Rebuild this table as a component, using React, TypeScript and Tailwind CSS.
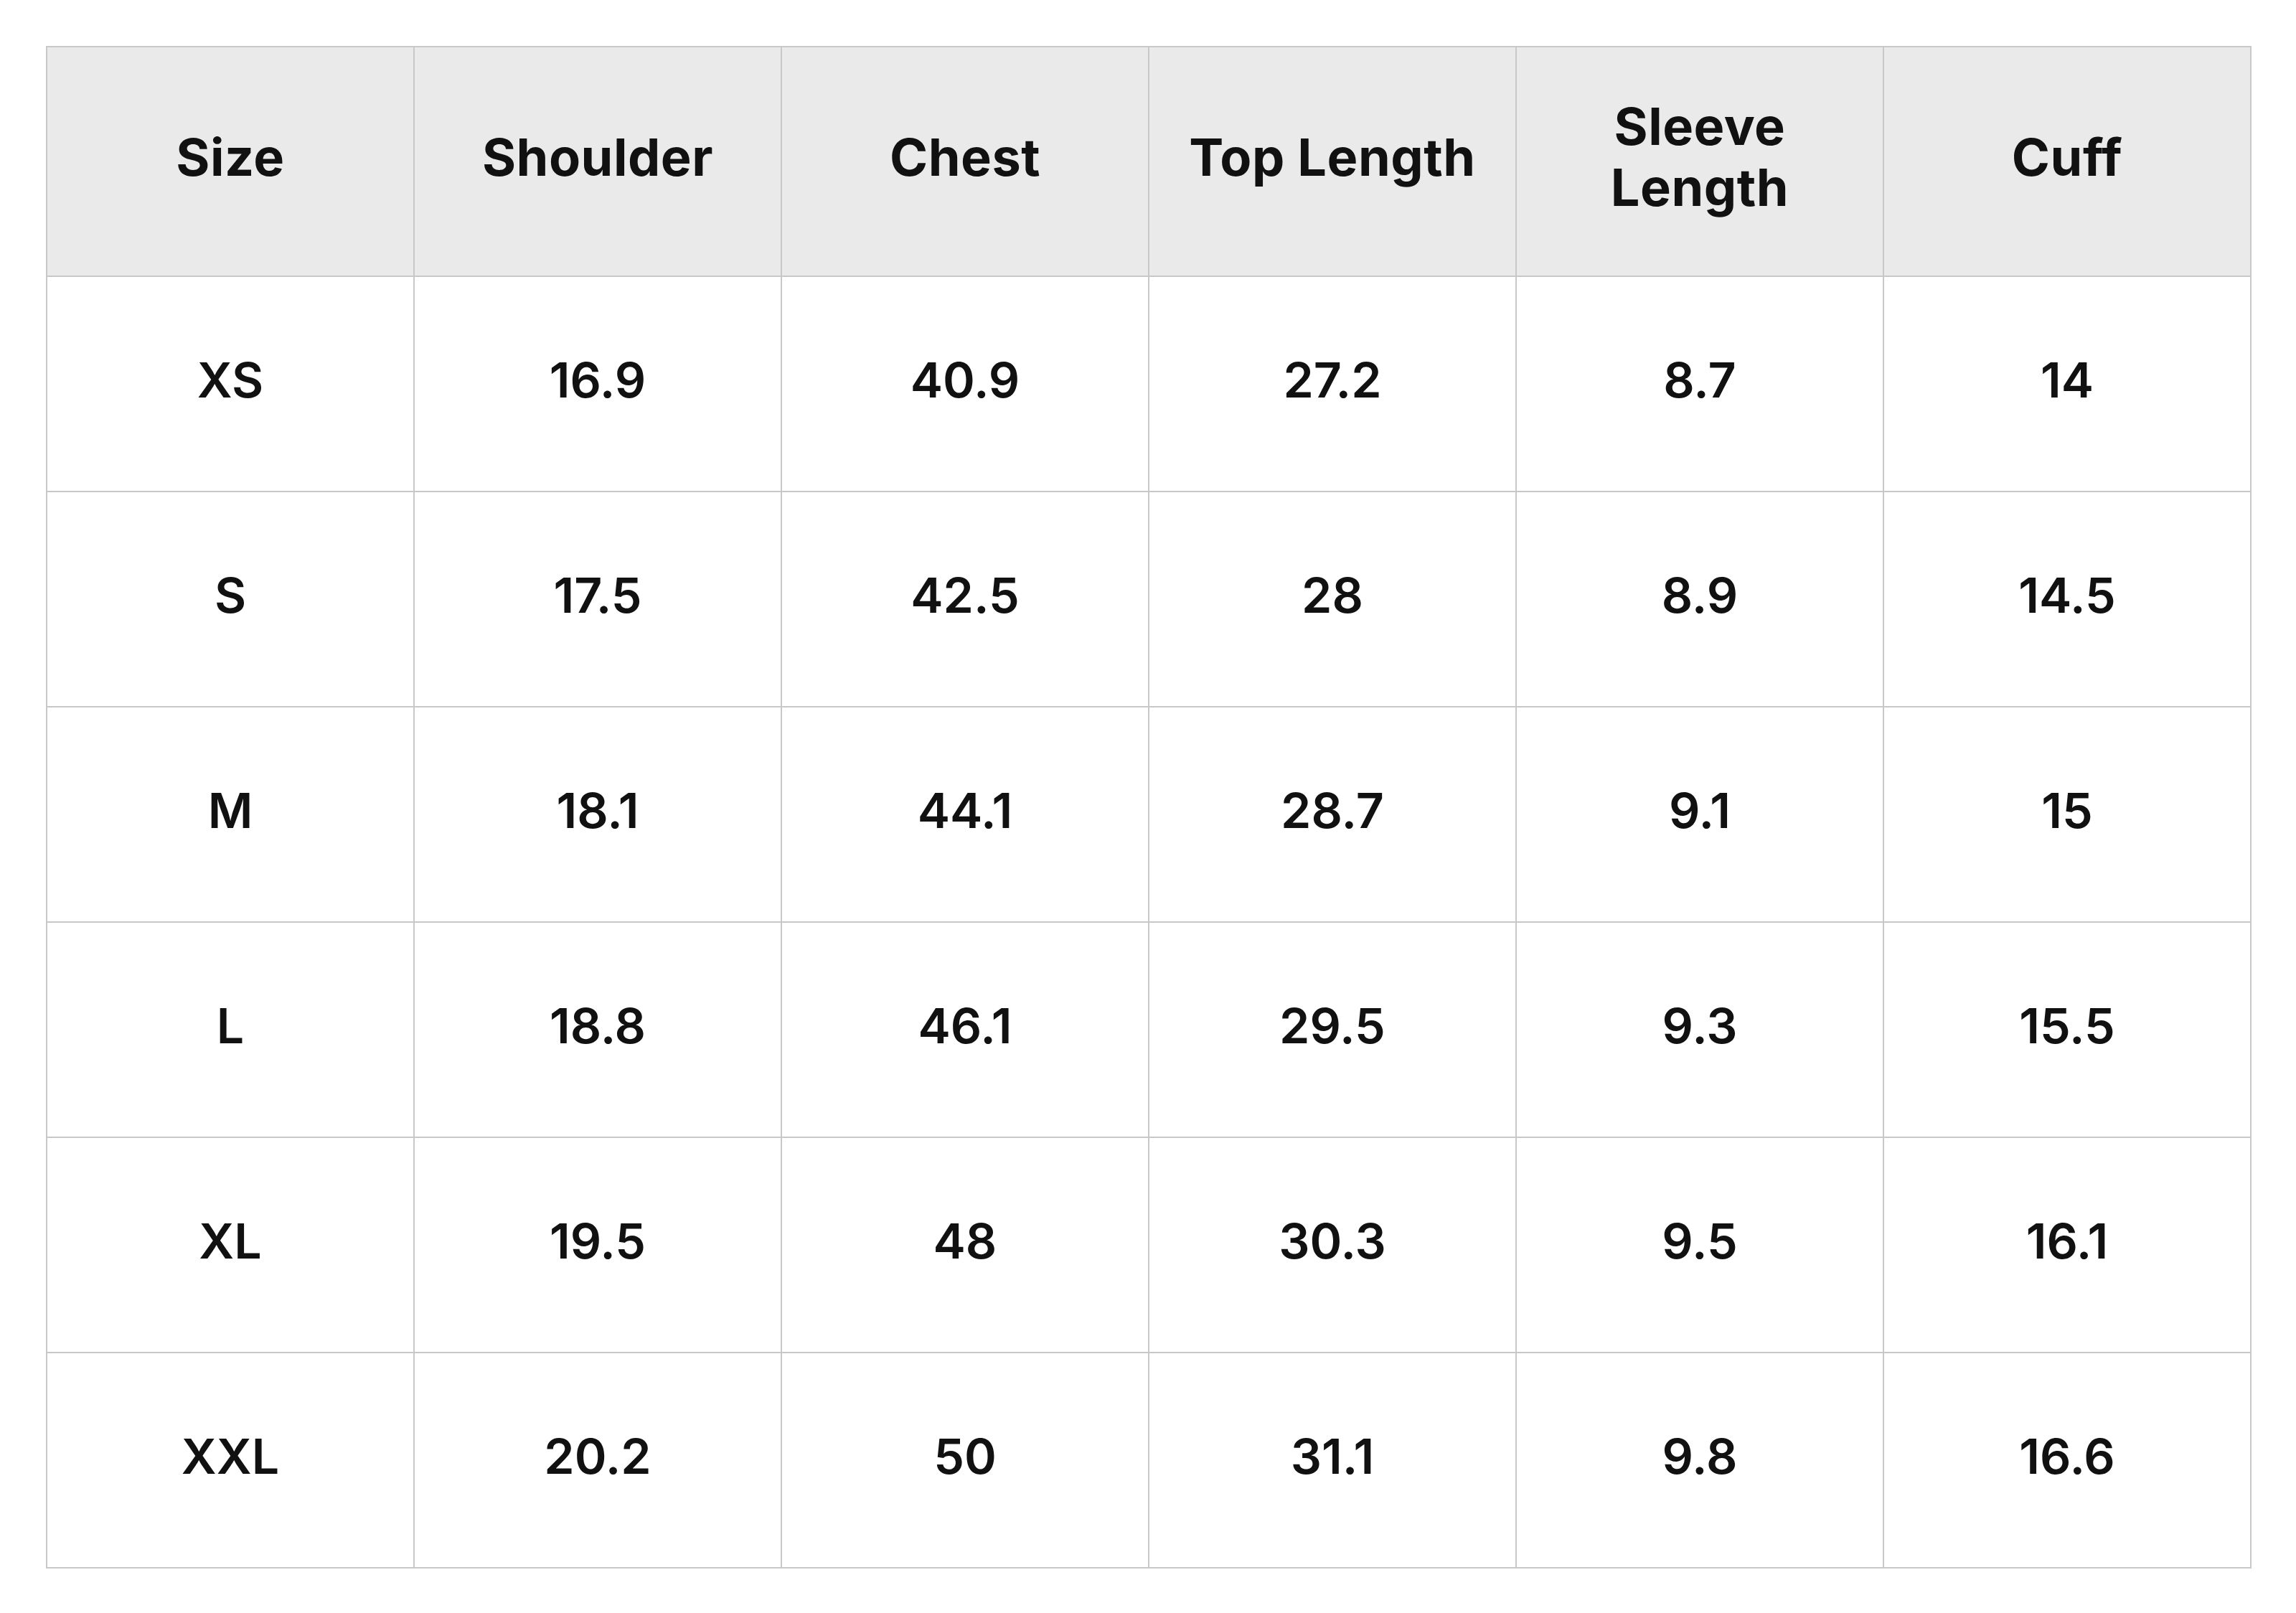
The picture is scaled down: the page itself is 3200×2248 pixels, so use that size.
import React from "react";

const headers = ["Size", "Shoulder", "Chest", "Top Length", "Sleeve Length", "Cuff"];
const rows = [
  ["XS", "16.9", "40.9", "27.2", "8.7", "14"],
  ["S", "17.5", "42.5", "28", "8.9", "14.5"],
  ["M", "18.1", "44.1", "28.7", "9.1", "15"],
  ["L", "18.8", "46.1", "29.5", "9.3", "15.5"],
  ["XL", "19.5", "48", "30.3", "9.5", "16.1"],
  ["XXL", "20.2", "50", "31.1", "9.8", "16.6"],
];

export default function App() {
  return (
    <div className="min-h-[2248px] w-[3200px] bg-white pl-[64px] pt-[64px]" style={{ fontFamily: "Inter, 'Noto Sans', sans-serif" }}>
      <table className="w-[3074px] table-fixed border-collapse border-2 border-[#c8c8c8] text-[#111111]">
        <thead>
          <tr className="bg-[#eaeaea]">
            {headers.map((h) => (
              <th
                key={h}
                className="h-[320px] border-2 border-[#c8c8c8] px-[40px] pb-[14px] text-center align-middle text-[72px] font-bold leading-[85px] tracking-[0.5px]"
              >
                {h}
              </th>
            ))}
          </tr>
        </thead>
        <tbody>
          {rows.map((r) => (
            <tr key={r[0]}>
              {r.map((c, i) => (
                <td
                  key={i}
                  className="h-[300px] border-2 border-[#c8c8c8] pb-[12px] text-center align-middle text-[68px] font-semibold leading-none"
                >
                  {c}
                </td>
              ))}
            </tr>
          ))}
        </tbody>
      </table>
    </div>
  );
}
